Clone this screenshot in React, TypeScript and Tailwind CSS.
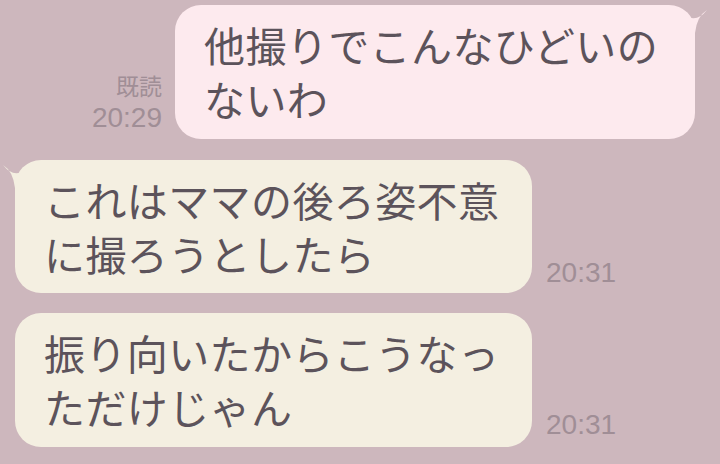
import React from "react";

const jp = { fontFamily: '"Noto Sans CJK JP", "Noto Sans", sans-serif' };
const latin = { fontFamily: '"Liberation Sans", Arial, sans-serif' };

function Tail({ color, side }: { color: string; side: "left" | "right" }) {
  return (
    <svg
      width="60"
      height="40"
      viewBox="0 0 60 40"
      className={
        side === "right"
          ? "absolute top-0 right-[-20px]"
          : "absolute top-0 left-[-20px] -scale-x-100"
      }
    >
      <path d="M28 8 Q40 20 52 5 Q42 11 40 28 L28 28 Z" fill={color} />
    </svg>
  );
}

function Bubble({
  lines,
  color,
  side,
  width,
  height,
  tail,
}: {
  lines: string[];
  color: string;
  side: "left" | "right";
  width: string;
  height: string;
  tail?: boolean;
}) {
  return (
    <div
      className={`relative ${width} ${height} rounded-[26px] pl-[29px] pt-[12px] text-[41px] leading-[54px] text-[#5c535b] tracking-[0.4px]`}
      style={{ ...jp, backgroundColor: color }}
    >
      {tail && <Tail color={color} side={side} />}
      <div className="relative">
        {lines.map((l, i) => (
          <div key={i} className="whitespace-nowrap">
            {l}
          </div>
        ))}
      </div>
    </div>
  );
}

export default function App() {
  const pink = "#fdeaee";
  const cream = "#f4efe1";
  return (
    <div className="w-[720px] h-[464px] overflow-hidden bg-[#cdb7bd] flex flex-col">
      <div className="flex justify-end items-end pt-[5px] pr-[25px]">
        <div className="flex flex-col items-end mr-[13px] mb-[6px] text-[#a08e96]">
          <div className="text-[23px] leading-[28px]" style={jp}>
            既読
          </div>
          <div className="text-[28px] leading-[30px] mt-[4px]" style={latin}>
            20:29
          </div>
        </div>
        <Bubble
          lines={["他撮りでこんなひどいの", "ないわ"]}
          color={pink}
          side="right"
          width="w-[520px]"
          height="h-[134px]"
          tail
        />
      </div>

      <div className="flex items-end pl-[15px] mt-[21px]">
        <Bubble
          lines={["これはママの後ろ姿不意", "に撮ろうとしたら"]}
          color={cream}
          side="left"
          width="w-[517px]"
          height="h-[133px]"
          tail
        />
        <div
          className="ml-[14px] mb-[5px] text-[28px] leading-[30px] text-[#a08e96]"
          style={latin}
        >
          20:31
        </div>
      </div>

      <div className="flex items-end pl-[15px] mt-[20px]">
        <Bubble
          lines={["振り向いたからこうなっ", "ただけじゃん"]}
          color={cream}
          side="left"
          width="w-[517px]"
          height="h-[134px]"
        />
        <div
          className="ml-[14px] mb-[7px] text-[28px] leading-[30px] text-[#a08e96]"
          style={latin}
        >
          20:31
        </div>
      </div>
    </div>
  );
}
